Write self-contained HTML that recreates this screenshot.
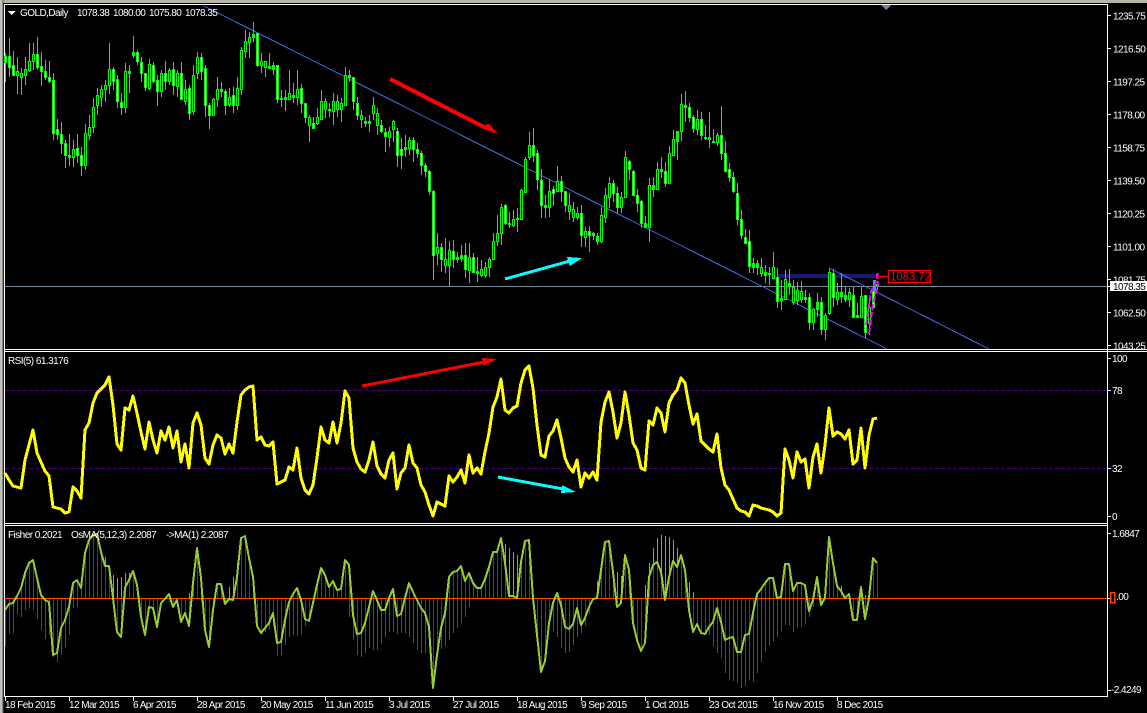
<!DOCTYPE html>
<html><head><meta charset="utf-8"><title>GOLD,Daily</title>
<style>
html,body{margin:0;padding:0;background:#000;width:1147px;height:713px;overflow:hidden}
svg{display:block}
text{font-family:"Liberation Sans",sans-serif;font-size:10px;fill:#fff;letter-spacing:-.55px}
</style></head><body>
<svg width="1147" height="713" viewBox="0 0 1147 713" xmlns="http://www.w3.org/2000/svg" shape-rendering="crispEdges">
<rect width="1147" height="713" fill="#000"/>
<rect x="0" y="0" width="1147" height="3" fill="#b8b4a8"/>
<rect x="0" y="0" width="3" height="713" fill="#c4c0b8"/>
<path d="M3 0V713" stroke="#555" fill="none"/>
<path d="M4.5 4V696.5M4 4.5H1108M1107.5 4V697M4 349.5H1147M4 351.5H1147M4 523.5H1108M4 525.5H1108M4 696.5H1108" stroke="#fff" fill="none"/>
<path d="M1108 15.5h3M1108 48.5h3M1108 81.5h3M1108 114.5h3M1108 147.5h3M1108 180.5h3M1108 213.5h3M1108 246.5h3M1108 279.5h3M1108 312.5h3M1108 345.5h3M1108 358.5h3M1108 390.5h3M1108 468.5h3M1108 516.5h3M1108 533.5h3M1108 598.5h3M1108 690.5h3" stroke="#fff"/>
<path d="M5.5 697v4M69.5 697v4M133.5 697v4M197.5 697v4M261.5 697v4M325.5 697v4M389.5 697v4M453.5 697v4M517.5 697v4M581.5 697v4M645.5 697v4M709.5 697v4M773.5 697v4M837.5 697v4" stroke="#fff"/>
<polygon points="881,5 891,5 886,10" fill="#778899"/>

<!-- horizontal price line and zone -->
<rect x="777" y="274" width="98" height="4" fill="#191970"/>
<path d="M5 286.5H1107" stroke="#778899"/>

<!-- trend lines -->
<path d="M204 6L887 349" stroke="#4169e1" fill="none"/>
<path d="M829 268L989 349" stroke="#4169e1" fill="none"/>

<!-- candle wicks -->
<path fill="none" stroke="#0f0" d="M5.5 53V82M9.5 38V77M13.5 51V76M17.5 57V94M21.5 68V95M25.5 57V85M29.5 43V72M33.5 43V70M37.5 37V70M41.5 52V86M45.5 60V80M49.5 61V83M53.5 73V140M57.5 119V140M61.5 122V154M65.5 140V168M69.5 134V166M73.5 140V167M77.5 134V163M81.5 147V176M85.5 124V170M89.5 115V140M93.5 98V133M97.5 88V115M101.5 85V107M105.5 80V102M109.5 43V94M113.5 67V90M117.5 75V108M121.5 93V115M125.5 63V113M129.5 65V93M133.5 36V58M137.5 50V65M141.5 57V82M145.5 73V91M149.5 59V90M153.5 62V83M157.5 75V106M161.5 70V97M165.5 61V90M169.5 68V85M173.5 62V95M177.5 70V97M181.5 62V100M185.5 80V105M189.5 85V120M193.5 65V115M197.5 52V79M201.5 53V80M205.5 65V117M209.5 103V129M213.5 98V116M217.5 77V107M221.5 82V97M225.5 89V115M229.5 88V107M233.5 87V113M237.5 77V110M241.5 47V95M245.5 30V58M249.5 32V58M253.5 22V42M257.5 33V67M261.5 53V73M265.5 61V77M269.5 53V68M273.5 62V75M277.5 65V103M281.5 90V107M285.5 90V111M289.5 70V100M293.5 83V103M297.5 70V105M301.5 84V113M305.5 103V123M309.5 115V142M313.5 117V128M317.5 108V125M321.5 90V120M325.5 98V118M329.5 103V117M333.5 93V125M337.5 95V117M341.5 98V122M345.5 67V105M349.5 70V82M353.5 77V110M357.5 97V120M361.5 110V128M365.5 117V127M369.5 115V132M373.5 97V120M377.5 108V135M381.5 120V133M385.5 128V152M389.5 127V147M393.5 120V142M397.5 128V167M401.5 138V169M405.5 135V157M409.5 137V155M413.5 137V162M417.5 143V158M421.5 151V175M425.5 163V177M429.5 170V195M433.5 190V280M437.5 233V265M441.5 243V272M445.5 238V273M449.5 241V287M453.5 240V268M457.5 252V263M461.5 245V262M465.5 243V278M469.5 243V283M473.5 253V273M477.5 257V282M481.5 260V277M485.5 262V278M489.5 257V277M493.5 233V260M497.5 215V246M501.5 204V245M505.5 204V225M509.5 212V228M513.5 210V227M517.5 208V232M521.5 189V220M525.5 157V193M529.5 132V160M533.5 128V162M537.5 150V190M541.5 169V218M545.5 195V218M549.5 179V217M553.5 186V206M557.5 166V190M561.5 176V202M565.5 191V212M569.5 193V220M573.5 202V222M577.5 207V220M581.5 205V247M585.5 227V247M589.5 226V252M593.5 232V240M597.5 233V245M601.5 207V243M605.5 188V223M609.5 177V208M613.5 180V202M617.5 187V213M621.5 192V213M625.5 151V197M629.5 160V180M633.5 170V195M637.5 189V212M641.5 200V228M645.5 216V228M649.5 178V242M653.5 177V197M657.5 162V188M661.5 157V178M665.5 162V187M669.5 146V183M673.5 130V156M677.5 131V160M681.5 94V141M685.5 91V122M689.5 103V122M693.5 115V133M697.5 110V135M701.5 112V140M705.5 125V140M709.5 112V148M713.5 129V143M717.5 133V146M721.5 106V160M725.5 141V172M729.5 163V182M733.5 172V193M737.5 183V225M741.5 210V239M745.5 229V243M749.5 230V273M753.5 258V273M757.5 260V275M761.5 258V277M765.5 265V283M769.5 267V285M773.5 252V278M777.5 268V308M781.5 280V310M785.5 270V300M789.5 269V295M793.5 280V305M797.5 282V305M801.5 281V303M805.5 290V303M809.5 293V330M813.5 308V330M817.5 293V317M821.5 297V335M825.5 313V340M829.5 268V315M833.5 269V307M837.5 283V305M841.5 273V303M845.5 287V302M849.5 288V307M853.5 287V318M857.5 303V318M861.5 287V318M865.5 295V338M869.5 297V335M873.5 280V308M877.5 283V290"/>
<!-- candle bodies -->
<path fill="none" stroke="#0f0" stroke-width="3" d="M5.5 56V63M9.5 56V68M13.5 65V76M17.5 71V76M21.5 73V78M25.5 69V76M29.5 61V71M33.5 54V62M37.5 54V68M41.5 66V72M45.5 71V78M49.5 77V82M53.5 80V134M57.5 129V135M61.5 134V144M65.5 143V156M69.5 155V158M73.5 149V158M77.5 148V156M81.5 155V166M85.5 133V166M89.5 127V136M93.5 107V128M97.5 95V106M101.5 89V98M105.5 85V90M109.5 69V86M113.5 69V82M117.5 79V102M121.5 102V108M125.5 71V108M129.5 71V74M133.5 52V56M137.5 52V62M141.5 62V74M145.5 73V88M149.5 64V89M153.5 65V82M157.5 80V92M161.5 73V92M165.5 73V82M169.5 70V82M173.5 69V86M177.5 73V87M181.5 73V100M185.5 89V102M189.5 88V114M193.5 75V112M197.5 57V74M201.5 57V72M205.5 68V106M209.5 105V116M213.5 99V116M217.5 89V100M221.5 89V92M225.5 91V106M229.5 97V105M233.5 95V106M237.5 88V106M241.5 50V90M245.5 41V52M249.5 37V43M253.5 34V38M257.5 33V66M261.5 61V66M265.5 61V68M269.5 66V69M273.5 65V70M277.5 65V100M281.5 98V100M285.5 97V100M289.5 93V100M293.5 95V98M297.5 89V98M301.5 88V104M305.5 103V118M309.5 117V126M313.5 123V129M317.5 117V124M321.5 101V120M325.5 101V110M329.5 109V111M333.5 101V112M337.5 101V110M341.5 103V110M345.5 75V106M349.5 75V78M353.5 77V102M357.5 103V116M361.5 115V120M365.5 121V124M369.5 121V124M373.5 105V114M377.5 113V126M381.5 125V132M385.5 132V137M389.5 131V138M393.5 121V130M397.5 131V156M401.5 149V156M405.5 147V150M409.5 140V149M413.5 140V150M417.5 149V154M421.5 153V166M425.5 165V172M429.5 171V192M433.5 191V256M437.5 247V254M441.5 247V260M445.5 259V266M449.5 250V266M453.5 251V260M457.5 257V260M461.5 255V259M465.5 255V270M469.5 257V271M473.5 257V273M477.5 271V274M481.5 269V276M485.5 267V276M489.5 259V268M493.5 241V260M497.5 233V242M501.5 207V234M505.5 205V224M509.5 223V225M513.5 219V226M517.5 218V220M521.5 190V220M525.5 159V193M529.5 145V158M533.5 145V156M537.5 153V180M541.5 180V206M545.5 205V208M549.5 191V208M553.5 189V194M557.5 181V192M561.5 181V192M565.5 191V206M569.5 205V212M573.5 209V218M577.5 213V218M581.5 213V236M585.5 231V238M589.5 231V236M593.5 233V236M597.5 236V242M601.5 215V242M605.5 195V218M609.5 183V198M613.5 183V194M617.5 193V208M621.5 197V208M625.5 157V198M629.5 161V170M633.5 171V196M637.5 195V204M641.5 201V224M645.5 223V228M649.5 185V228M653.5 185V190M657.5 169V190M661.5 169V172M665.5 171V184M669.5 153V184M673.5 139V156M677.5 131V142M681.5 104V132M685.5 105V108M689.5 107V118M693.5 117V129M697.5 119V130M701.5 119V136M705.5 137V139M709.5 137V140M713.5 141V143M717.5 135V143M721.5 135V154M725.5 153V172M729.5 169V178M733.5 177V192M737.5 193V220M741.5 219V236M745.5 237V244M749.5 241V267M753.5 263V268M757.5 263V268M761.5 267V274M765.5 272V276M769.5 273V275M773.5 267V279M777.5 277V302M781.5 298V301M785.5 279V300M789.5 283V287M793.5 287V303M797.5 290V301M801.5 291V300M805.5 297V300M809.5 297V323M813.5 309V323M817.5 302V310M821.5 302V330M825.5 315V330M829.5 272V314M833.5 273V298M837.5 292V300M841.5 292V297M845.5 295V300M849.5 292V300M853.5 295V318M857.5 315V318M861.5 296V318M865.5 295V333M869.5 307V324M873.5 291V308M877.5 284V287"/>
<!-- hollow black centers -->
<path fill="none" stroke="#000" d="M17.5 72V75M21.5 74V77M25.5 70V75M29.5 62V70M33.5 55V61M73.5 150V157M85.5 134V165M89.5 128V135M93.5 108V127M97.5 96V105M101.5 90V97M105.5 86V89M109.5 70V85M125.5 72V107M149.5 65V88M161.5 74V91M169.5 71V81M177.5 74V86M185.5 90V101M193.5 76V111M197.5 58V73M213.5 100V115M217.5 90V99M229.5 98V104M237.5 89V105M241.5 51V89M245.5 42V51M249.5 38V42M261.5 62V65M265.5 62V67M289.5 94V99M297.5 90V97M309.5 118V125M317.5 118V123M321.5 102V119M325.5 102V109M333.5 102V111M337.5 102V109M341.5 104V109M345.5 76V105M361.5 116V119M373.5 106V113M377.5 114V125M389.5 132V137M393.5 122V129M409.5 141V148M437.5 248V253M445.5 260V265M449.5 251V265M469.5 258V270M481.5 270V275M485.5 268V275M489.5 260V267M493.5 242V259M497.5 234V241M501.5 208V233M513.5 220V225M521.5 191V219M525.5 160V192M529.5 146V157M549.5 192V207M557.5 182V191M569.5 206V211M573.5 210V217M577.5 214V217M585.5 232V237M601.5 216V241M605.5 196V217M609.5 184V197M621.5 198V207M625.5 158V197M649.5 186V227M657.5 170V189M669.5 154V183M673.5 140V155M681.5 105V131M697.5 120V129M717.5 136V142M761.5 268V273M773.5 268V278M785.5 280V299M793.5 288V302M797.5 291V300M801.5 292V299M813.5 310V322M825.5 316V329M829.5 273V313M837.5 293V299M849.5 293V299M861.5 297V317M869.5 308V323"/>
<!-- white centers -->
<path fill="none" stroke="#fff" d="M5.5 57V62M9.5 57V67M13.5 66V75M37.5 55V67M41.5 67V71M45.5 72V77M49.5 78V81M53.5 81V133M57.5 130V134M61.5 135V143M65.5 144V155M77.5 149V155M81.5 156V165M113.5 70V81M117.5 80V101M121.5 103V107M137.5 53V61M141.5 63V73M145.5 74V87M153.5 66V81M157.5 81V91M165.5 74V81M173.5 70V85M181.5 74V99M189.5 89V113M201.5 58V71M205.5 69V105M209.5 106V115M225.5 92V105M233.5 96V105M257.5 34V65M277.5 66V99M301.5 89V103M305.5 104V117M313.5 124V128M353.5 78V101M357.5 104V115M381.5 126V131M385.5 133V136M397.5 132V155M401.5 150V155M413.5 141V149M417.5 150V153M421.5 154V165M425.5 166V171M429.5 172V191M433.5 192V255M441.5 248V259M453.5 252V259M465.5 256V269M473.5 258V272M505.5 206V223M533.5 146V155M537.5 154V179M541.5 181V205M553.5 190V193M561.5 182V191M565.5 192V205M581.5 214V235M589.5 232V235M613.5 184V193M617.5 194V207M629.5 162V169M633.5 172V195M637.5 196V203M641.5 202V223M665.5 172V183M689.5 108V117M693.5 118V128M701.5 120V135M721.5 136V153M725.5 154V171M729.5 170V177M733.5 178V191M737.5 194V219M741.5 220V235M745.5 238V243M749.5 242V266M777.5 278V301M809.5 298V322M821.5 303V329M833.5 274V297M853.5 296V317M865.5 296V332M873.5 292V307"/>
<rect x="873" y="280" width="3" height="11" fill="#00bfff"/>

<!-- magenta zigzag -->
<path fill="none" stroke="#f0f" stroke-width="2" stroke-dasharray="6 2" d="M866 325L871 292L877 280L878 271"/>
<path fill="none" stroke="#f0f" stroke-width="2" stroke-dasharray="6 2" d="M869 334L873 304L878 285L877 274"/>

<!-- main arrows -->
<path d="M390 79L486 128" stroke="#f00" stroke-width="4" fill="none"/>
<polygon points="498,134 483,129 488,123" fill="#f00"/>
<path d="M505 279L570 261" stroke="#0ff" stroke-width="3" fill="none"/>
<polygon points="582,258 567,257 570,266" fill="#0ff"/>

<!-- label -->
<path d="M876 276.5H888" stroke="#f00"/>
<rect x="888.5" y="270.5" width="42" height="12" fill="#000" stroke="#f00"/>
<text x="890" y="280.5" style="font-size:11.5px;fill:#f00;letter-spacing:-.1px">1083.72</text>

<!-- price axis -->
<g>
<text x="1113" y="19.5">1235.75</text>
<text x="1113" y="52.5">1216.50</text>
<text x="1113" y="85.5">1197.25</text>
<text x="1113" y="118.5">1178.00</text>
<text x="1113" y="151.5">1158.75</text>
<text x="1113" y="184.5">1139.50</text>
<text x="1113" y="217.5">1120.25</text>
<text x="1113" y="250.5">1101.00</text>
<text x="1113" y="283.5">1081.75</text>
<text x="1113" y="316.5">1062.50</text>
<text x="1113" y="349.5">1043.25</text>
</g>
<rect x="1110" y="281" width="37" height="10" fill="#fff"/>
<path d="M1107 286.5h3" stroke="#fff"/>
<text x="1113" y="290" style="fill:#000">1078.35</text>

<!-- header -->
<polygon points="8,11 15.5,11 11.7,15" fill="#fff"/>
<text x="20" y="16">GOLD,Daily</text>
<text x="77" y="16">1078.38</text>
<text x="113" y="16">1080.00</text>
<text x="149" y="16">1075.80</text>
<text x="185" y="16">1078.35</text>

<!-- RSI pane -->
<path d="M5 390.5H1107M5 468.5H1107" stroke="#4b0082" stroke-dasharray="4 2" fill="none"/>
<polyline fill="none" stroke="#ff0" stroke-width="3" stroke-linejoin="round" points="5,473 9,480 13,486 17,487 21,488 25,460 29,445 33,430 37,453 41,462 45,471 49,476 53,507 57,508 61,509 65,513 69,512 73,487 77,491 81,498 85,430 89,423 93,403 97,393 101,389 105,385 109,377 113,405 117,444 121,450 125,408 129,410 133,396 137,413 141,432 145,449 149,422 153,440 157,453 161,431 165,440 169,427 173,448 177,431 181,462 185,444 189,468 193,423 197,413 201,425 205,458 209,464 213,445 217,435 221,438 225,454 229,444 233,453 237,422 241,395 245,390 249,387 253,386 257,440 261,437 265,445 269,446 273,442 277,484 281,482 285,480 289,467 293,470 297,448 301,478 305,490 309,494 313,485 317,458 321,427 325,440 329,443 333,422 337,443 341,423 345,391 349,398 353,448 357,462 361,469 365,472 369,460 373,442 377,466 381,474 385,478 389,460 393,453 397,489 401,473 405,468 409,445 413,463 417,468 421,485 425,492 429,505 433,516 437,502 441,504 445,506 449,476 453,482 457,477 461,470 465,483 469,455 473,473 477,468 481,474 485,452 489,433 493,407 497,397 501,379 505,410 509,413 513,408 517,406 521,383 525,370 529,366 533,388 537,425 541,455 545,457 549,436 553,431 557,420 561,438 565,458 569,467 573,472 577,460 581,487 585,473 589,478 593,472 597,480 601,422 605,402 609,392 613,412 617,438 621,423 625,392 629,415 633,443 637,450 641,468 645,470 649,421 653,425 657,408 661,413 665,432 669,403 673,395 677,390 681,378 685,383 689,405 693,424 697,414 701,441 705,445 709,449 713,452 717,434 721,468 725,485 729,490 733,499 737,508 741,511 745,512 749,516 753,505 757,506 761,508 765,509 769,510 773,512 777,516 781,513 785,449 789,460 793,478 797,452 801,462 805,459 809,488 813,457 817,444 821,473 825,445 829,408 833,436 837,432 841,434 845,439 849,430 853,464 857,460 861,428 865,468 869,435 873,419 877,418"/>
<path d="M362 386L484 362" stroke="#f00" stroke-width="3" fill="none"/>
<polygon points="497,359 482,358 483,366" fill="#f00"/>
<path d="M498 477L563 489" stroke="#0ff" stroke-width="3" fill="none"/>
<polygon points="576,492 562,485 561,493" fill="#0ff"/>
<text x="8" y="364">RSI(5) 61.3176</text>
<text x="1112" y="362">100</text>
<text x="1112" y="394">78</text>
<text x="1112" y="472">32</text>
<text x="1112" y="520">0</text>

<!-- Fisher pane: OsMA histogram red -->
<path fill="none" stroke="#f00" d="M5.5 598V646M9.5 598V634M13.5 598V633M17.5 598V614M21.5 598V617M25.5 598V610M29.5 598V608M33.5 598V610M37.5 598V619M41.5 598V630M45.5 598V639M49.5 598V635M53.5 598V657M57.5 598V662M61.5 598V655M65.5 598V647M69.5 598V635M73.5 598V608M77.5 598V607M169.5 598V602M201.5 598V603M257.5 598V627M261.5 598V635M265.5 598V632M269.5 598V630M273.5 598V627M277.5 598V656M281.5 598V655M285.5 598V645M289.5 598V637M293.5 598V635M297.5 598V636M301.5 598V634M305.5 598V626M349.5 598V617M353.5 598V640M357.5 598V655M361.5 598V657M365.5 598V653M369.5 598V648M373.5 598V650M377.5 598V650M381.5 598V644M385.5 598V637M389.5 598V632M393.5 598V632M397.5 598V634M401.5 598V633M405.5 598V633M409.5 598V637M413.5 598V643M417.5 598V650M421.5 598V653M425.5 598V653M429.5 598V647M441.5 598V649M445.5 598V646M449.5 598V640M453.5 598V633M457.5 598V628M461.5 598V623M465.5 598V617M469.5 598V607M553.5 598V631M557.5 598V637M561.5 598V648M565.5 598V653M569.5 598V652M573.5 598V645M577.5 598V637M581.5 598V633M585.5 598V626M589.5 598V614M709.5 598V635M713.5 598V646M717.5 598V653M721.5 598V658M725.5 598V673M729.5 598V680M733.5 598V681M737.5 598V683M741.5 598V688M745.5 598V686M749.5 598V680M753.5 598V682M757.5 598V673M761.5 598V662M765.5 598V652M769.5 598V646M773.5 598V641M777.5 598V637M781.5 598V631M785.5 598V625M789.5 598V626M793.5 598V632M797.5 598V628M801.5 598V627M805.5 598V624M809.5 598V617M813.5 598V607"/>
<!-- green -->
<path fill="none" stroke="#0f0" d="M105.5 598V557M113.5 598V575M117.5 598V578M121.5 598V577M125.5 598V573M129.5 598V573M189.5 598V593M229.5 598V587M233.5 598V577M237.5 598V563M505.5 598V544M509.5 598V548M513.5 598V552M517.5 598V555M597.5 598V581M617.5 598V572M621.5 598V576M645.5 598V585M649.5 598V563M653.5 598V548M657.5 598V538M661.5 598V535M665.5 598V536M669.5 598V537M673.5 598V540M677.5 598V548M681.5 598V555M685.5 598V570M689.5 598V582M693.5 598V592M841.5 598V586M865.5 598V595"/>
<!-- gray Fisher histogram -->
<path fill="none" stroke="#2f4f4f" d="M5.5 598V610M9.5 598V604M13.5 598V603M17.5 598V596M21.5 598V588M25.5 598V573M29.5 598V563M33.5 598V560M37.5 598V578M41.5 598V595M45.5 598V600M49.5 598V602M53.5 598V655M57.5 598V653M61.5 598V628M65.5 598V620M69.5 598V607M73.5 598V583M77.5 598V580M81.5 598V588M85.5 598V553M89.5 598V540M93.5 598V535M97.5 598V534M101.5 598V552M105.5 598V566M109.5 598V566M117.5 598V632M121.5 598V637M125.5 598V588M129.5 598V580M133.5 598V571M137.5 598V585M141.5 598V617M145.5 598V635M149.5 598V607M153.5 598V608M157.5 598V627M161.5 598V603M165.5 598V599M169.5 598V594M173.5 598V607M177.5 598V600M181.5 598V622M185.5 598V613M189.5 598V626M193.5 598V583M197.5 598V548M201.5 598V578M205.5 598V630M209.5 598V647M213.5 598V610M217.5 598V584M221.5 598V584M225.5 598V604M229.5 598V599M233.5 598V600M237.5 598V577M241.5 598V538M245.5 598V536M249.5 598V558M253.5 598V577M257.5 598V626M261.5 598V633M265.5 598V628M269.5 598V623M273.5 598V613M277.5 598V643M281.5 598V642M285.5 598V620M289.5 598V602M293.5 598V594M297.5 598V588M301.5 598V600M305.5 598V619M309.5 598V621M313.5 598V603M317.5 598V585M321.5 598V568M325.5 598V575M329.5 598V587M333.5 598V581M337.5 598V590M341.5 598V589M345.5 598V560M349.5 598V565M353.5 598V615M357.5 598V634M361.5 598V633M365.5 598V623M369.5 598V607M373.5 598V591M377.5 598V600M381.5 598V610M385.5 598V610M393.5 598V589M397.5 598V616M401.5 598V614M409.5 598V583M413.5 598V592M417.5 598V600M421.5 598V608M425.5 598V613M429.5 598V627M433.5 598V688M437.5 598V655M441.5 598V628M445.5 598V613M449.5 598V577M453.5 598V572M457.5 598V571M461.5 598V566M465.5 598V581M469.5 598V573M473.5 598V583M477.5 598V588M481.5 598V588M485.5 598V579M489.5 598V567M493.5 598V552M497.5 598V552M501.5 598V538M505.5 598V563M509.5 598V596M513.5 598V596M521.5 598V562M525.5 598V541M529.5 598V540M537.5 598V635M541.5 598V672M545.5 598V661M549.5 598V623M553.5 598V603M557.5 598V593M561.5 598V605M565.5 598V627M569.5 598V629M573.5 598V624M577.5 598V608M581.5 598V625M585.5 598V618M589.5 598V607M593.5 598V599M601.5 598V570M605.5 598V542M609.5 598V541M613.5 598V572M617.5 598V607M621.5 598V603M625.5 598V555M629.5 598V570M633.5 598V623M637.5 598V640M641.5 598V651M645.5 598V643M649.5 598V577M653.5 598V565M657.5 598V562M661.5 598V572M665.5 598V600M669.5 598V577M673.5 598V561M677.5 598V567M681.5 598V555M685.5 598V570M689.5 598V610M693.5 598V632M697.5 598V624M701.5 598V633M705.5 598V634M709.5 598V627M713.5 598V622M717.5 598V608M721.5 598V622M725.5 598V640M729.5 598V638M733.5 598V637M737.5 598V652M741.5 598V652M745.5 598V635M749.5 598V634M753.5 598V613M757.5 598V594M761.5 598V589M765.5 598V583M769.5 598V578M773.5 598V578M781.5 598V597M785.5 598V564M789.5 598V564M793.5 598V591M797.5 598V583M801.5 598V583M805.5 598V585M809.5 598V611M813.5 598V600M817.5 598V577M821.5 598V605M829.5 598V537M833.5 598V563M837.5 598V586M841.5 598V591M849.5 598V594M853.5 598V620M857.5 598V620M861.5 598V587M865.5 598V619M873.5 598V558M877.5 598V563"/>
<path d="M5 598.5H1107" stroke="#ff4500"/>
<polyline fill="none" stroke="#9acd32" stroke-width="2" stroke-linejoin="round" points="5,610 9,604 13,603 17,596 21,588 25,573 29,563 33,560 37,578 41,595 45,600 49,602 53,655 57,653 61,628 65,620 69,607 73,583 77,580 81,588 85,553 89,540 93,535 97,534 101,552 105,566 109,566 113,598 117,632 121,637 125,588 129,580 133,571 137,585 141,617 145,635 149,607 153,608 157,627 161,603 165,599 169,594 173,607 177,600 181,622 185,613 189,626 193,583 197,548 201,578 205,630 209,647 213,610 217,584 221,584 225,604 229,599 233,600 237,577 241,538 245,536 249,558 253,577 257,626 261,633 265,628 269,623 273,613 277,643 281,642 285,620 289,602 293,594 297,588 301,600 305,619 309,621 313,603 317,585 321,568 325,575 329,587 333,581 337,590 341,589 345,560 349,565 353,615 357,634 361,633 365,623 369,607 373,591 377,600 381,610 385,610 389,598 393,589 397,616 401,614 405,598 409,583 413,592 417,600 421,608 425,613 429,627 433,688 437,655 441,628 445,613 449,577 453,572 457,571 461,566 465,581 469,573 473,583 477,588 481,588 485,579 489,567 493,552 497,552 501,538 505,563 509,596 513,596 517,598 521,562 525,541 529,540 533,598 537,635 541,672 545,661 549,623 553,603 557,593 561,605 565,627 569,629 573,624 577,608 581,625 585,618 589,607 593,599 597,598 601,570 605,542 609,541 613,572 617,607 621,603 625,555 629,570 633,623 637,640 641,651 645,643 649,577 653,565 657,562 661,572 665,600 669,577 673,561 677,567 681,555 685,570 689,610 693,632 697,624 701,633 705,634 709,627 713,622 717,608 721,622 725,640 729,638 733,637 737,652 741,652 745,635 749,634 753,613 757,594 761,589 765,583 769,578 773,578 777,598 781,597 785,564 789,564 793,591 797,583 801,583 805,585 809,611 813,600 817,577 821,605 825,598 829,537 833,563 837,586 841,591 845,598 849,594 853,620 857,620 861,587 865,619 869,598 873,558 877,563"/>
<text x="8" y="538">Fisher 0.2021</text>
<text x="71" y="538">OsMA(5,12,3) 2.2087</text>
<text x="166" y="538">-&gt;MA(1) 2.2087</text>
<text x="1112" y="537">1.6847</text>
<rect x="1110.5" y="592.5" width="4" height="10" fill="none" stroke="#ff4500" stroke-width="1.5"/>
<text x="1116" y="600">.00</text>
<text x="1111" y="693">-2.4249</text>

<!-- dates -->
<g>
<text x="5" y="708">18 Feb 2015</text>
<text x="69" y="708">12 Mar 2015</text>
<text x="133" y="708">6 Apr 2015</text>
<text x="197" y="708">28 Apr 2015</text>
<text x="261" y="708">20 May 2015</text>
<text x="325" y="708">11 Jun 2015</text>
<text x="389" y="708">3 Jul 2015</text>
<text x="453" y="708">27 Jul 2015</text>
<text x="517" y="708">18 Aug 2015</text>
<text x="581" y="708">9 Sep 2015</text>
<text x="645" y="708">1 Oct 2015</text>
<text x="709" y="708">23 Oct 2015</text>
<text x="773" y="708">16 Nov 2015</text>
<text x="837" y="708">8 Dec 2015</text>
</g>
</svg>
</body></html>
